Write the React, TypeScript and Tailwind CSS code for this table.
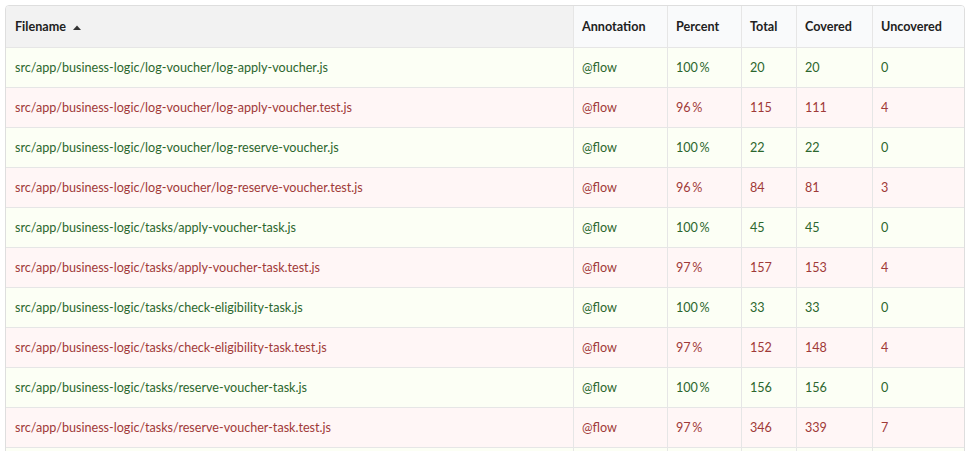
import React from 'react'

type Row = {
  file: string
  percent: number
  total: number
  covered: number
}

const rows: Row[] = [
  { file: 'src/app/business-logic/log-voucher/log-apply-voucher.js', percent: 100, total: 20, covered: 20 },
  { file: 'src/app/business-logic/log-voucher/log-apply-voucher.test.js', percent: 96, total: 115, covered: 111 },
  { file: 'src/app/business-logic/log-voucher/log-reserve-voucher.js', percent: 100, total: 22, covered: 22 },
  { file: 'src/app/business-logic/log-voucher/log-reserve-voucher.test.js', percent: 96, total: 84, covered: 81 },
  { file: 'src/app/business-logic/tasks/apply-voucher-task.js', percent: 100, total: 45, covered: 45 },
  { file: 'src/app/business-logic/tasks/apply-voucher-task.test.js', percent: 97, total: 157, covered: 153 },
  { file: 'src/app/business-logic/tasks/check-eligibility-task.js', percent: 100, total: 33, covered: 33 },
  { file: 'src/app/business-logic/tasks/check-eligibility-task.test.js', percent: 97, total: 152, covered: 148 },
  { file: 'src/app/business-logic/tasks/reserve-voucher-task.js', percent: 100, total: 156, covered: 156 },
  { file: 'src/app/business-logic/tasks/reserve-voucher-task.test.js', percent: 97, total: 346, covered: 339 },
]

const cols = ['w-[567px]', 'w-[94px]', 'w-[74px]', 'w-[55px]', 'w-[76px]', 'w-[92px]']

function SortCaret() {
  return (
    <svg width="8" height="5" viewBox="0 0 8 5" className="ml-[7px] inline-block">
      <path d="M0 5 L4 0.5 L8 5 Z" fill="#333" />
    </svg>
  )
}

export default function App() {
  return (
    <div className="h-[451px] overflow-hidden bg-white p-[5px] font-['Lato','Liberation_Sans',sans-serif] text-[12.6px]">
      <div className="w-[960px] rounded-t-[4px] border border-[#dedede] overflow-hidden">
        <table className="table-fixed border-separate border-spacing-0 w-[958px]">
          <thead>
            <tr className="h-[41px] text-left font-bold text-[#212121]">
              <th className={`${cols[0]} bg-[#f2f2f2] pl-[9px] pt-[2px] font-bold`}>
                <span className="inline-flex items-center">
                  Filename
                  <SortCaret />
                </span>
              </th>
              {['Annotation', 'Percent', 'Total', 'Covered', 'Uncovered'].map((h, i) => (
                <th key={h} className={`${cols[i + 1]} bg-[#f9fafb] border-l border-[#e6e6e6] pl-[8px] pt-[2px] font-bold`}>
                  {h}
                </th>
              ))}
            </tr>
          </thead>
          <tbody>
            {rows.map((r) => {
              const ok = r.percent === 100
              const tone = ok ? 'bg-[#fcfff5] text-[#2c662d]' : 'bg-[#fff6f6] text-[#9f3a38]'
              const cell = 'border-t border-[#e6e6e6] h-[40px] pl-[8px] pt-[2px] align-middle'
              return (
                <tr key={r.file} className={tone}>
                  <td className={`${cell} pl-[9px]`}>{r.file}</td>
                  <td className={`${cell} border-l`}>@flow</td>
                  <td className={`${cell} border-l`}>{r.percent}&#8201;%</td>
                  <td className={`${cell} border-l`}>{r.total}</td>
                  <td className={`${cell} border-l`}>{r.covered}</td>
                  <td className={`${cell} border-l`}>{r.total - r.covered}</td>
                </tr>
              )
            })}
            <tr className="bg-[#fcfff5]">
              <td className="border-t border-[#e6e6e6] h-[40px]" />
              <td className="border-t border-l border-[#e6e6e6]" />
              <td className="border-t border-l border-[#e6e6e6]" />
              <td className="border-t border-l border-[#e6e6e6]" />
              <td className="border-t border-l border-[#e6e6e6]" />
              <td className="border-t border-l border-[#e6e6e6]" />
            </tr>
          </tbody>
        </table>
      </div>
    </div>
  )
}
